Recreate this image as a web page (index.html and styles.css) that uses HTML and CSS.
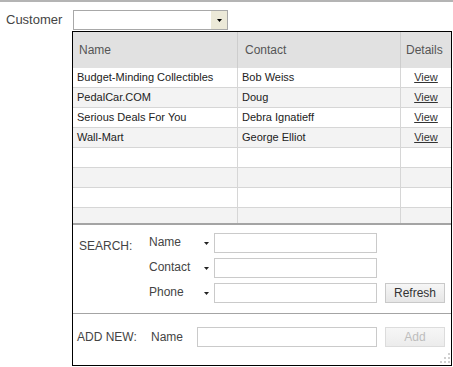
FILE: index.html
```html
<!DOCTYPE html>
<html lang="en">
<head>
<meta charset="UTF-8">
<title>Customer</title>
<link rel="stylesheet" href="styles.css">
</head>
<body>
<div class="customer-row">
    <label class="customer-label">Customer</label>
    <div class="combo">
        <span class="combo-btn">
            <svg width="5" height="3" viewBox="0 0 5 3"><polygon points="0,0 5,0 2.5,3" fill="#000"/></svg>
        </span>
    </div>
</div>
<div class="dropdown">
    <div class="grid">
        <div class="grid-row grid-head">
            <div class="cell">Name</div>
            <div class="cell">Contact</div>
            <div class="cell">Details</div>
        </div>
        <div class="grid-row">
            <div class="cell">Budget-Minding Collectibles</div>
            <div class="cell">Bob Weiss</div>
            <div class="cell link"><a href="#">View</a></div>
        </div>
        <div class="grid-row alt">
            <div class="cell">PedalCar.COM</div>
            <div class="cell">Doug</div>
            <div class="cell link"><a href="#">View</a></div>
        </div>
        <div class="grid-row">
            <div class="cell">Serious Deals For You</div>
            <div class="cell">Debra Ignatieff</div>
            <div class="cell link"><a href="#">View</a></div>
        </div>
        <div class="grid-row alt">
            <div class="cell">Wall-Mart</div>
            <div class="cell">George Elliot</div>
            <div class="cell link"><a href="#">View</a></div>
        </div>
        <div class="grid-row"><div class="cell"></div><div class="cell"></div><div class="cell"></div></div>
        <div class="grid-row alt"><div class="cell"></div><div class="cell"></div><div class="cell"></div></div>
        <div class="grid-row"><div class="cell"></div><div class="cell"></div><div class="cell"></div></div>
        <div class="grid-row alt"><div class="cell"></div><div class="cell"></div><div class="cell"></div></div>
    </div>

    <div class="search">
        <div class="section-label search-label">SEARCH:</div>
        <div class="search-fields">
            <div class="search-line">
                <span class="field-name">Name <svg width="5" height="3" viewBox="0 0 5 3"><polygon points="0,0 5,0 2.5,3" fill="#222"/></svg></span>
                <input class="text-input" type="text">
            </div>
            <div class="search-line">
                <span class="field-name">Contact <svg width="5" height="3" viewBox="0 0 5 3"><polygon points="0,0 5,0 2.5,3" fill="#222"/></svg></span>
                <input class="text-input" type="text">
            </div>
            <div class="search-line">
                <span class="field-name">Phone <svg width="5" height="3" viewBox="0 0 5 3"><polygon points="0,0 5,0 2.5,3" fill="#222"/></svg></span>
                <input class="text-input" type="text">
                <button class="btn">Refresh</button>
            </div>
        </div>
    </div>

    <div class="add-new">
        <div class="section-label add-label">ADD NEW:</div>
        <span class="add-name">Name</span>
        <input class="text-input wide" type="text">
        <button class="btn" disabled>Add</button>
    </div>

    <svg class="grip" width="14" height="12" viewBox="0 0 14 12">
        <rect x="11" y="1" width="2" height="2" fill="#d0d0d0"/>
        <rect x="7" y="5" width="2" height="2" fill="#d0d0d0"/>
        <rect x="11" y="5" width="2" height="2" fill="#d0d0d0"/>
        <rect x="3" y="9" width="2" height="2" fill="#d0d0d0"/>
        <rect x="7" y="9" width="2" height="2" fill="#d0d0d0"/>
        <rect x="11" y="9" width="2" height="2" fill="#d0d0d0"/>
    </svg>
</div>
</body>
</html>
```

FILE: styles.css
```css
body {
    margin: 0;
    border-top: 2px solid #b4b4b4;
    font-family: "Liberation Sans", Arial, sans-serif;
    font-size: 12px;
    color: #333;
    background-color: #fff;
}

.customer-row {
    display: flex;
    padding-top: 8px;
}

.customer-label {
    width: 73px;
    box-sizing: border-box;
    padding-left: 6px;
    line-height: 20px;
    font-size: 13px;
    color: #444;
}

.combo {
    width: 155px;
    height: 20px;
    box-sizing: border-box;
    border: 1px solid #a8a8a8;
    display: flex;
    justify-content: flex-end;
}

.combo-btn {
    width: 16px;
    height: 18px;
    background-color: #ece9d8;
    display: flex;
    align-items: center;
    justify-content: center;
}

.dropdown {
    position: relative;
    width: 380px;
    box-sizing: border-box;
    margin: 1px 0 0 72px;
    border: 1px solid #000;
    background-color: #fff;
}

/* grille des clients */
.grid {
    height: 191px;
    overflow: hidden;
    border-bottom: 2px solid #a4a4a4;
}

.grid-row {
    display: grid;
    grid-template-columns: 165px 163px 1fr;
    height: 20px;
    box-sizing: border-box;
    border-bottom: 1px solid #d6d6d6;
    font-size: 11px;
    color: #222;
}

.grid-row.alt {
    background-color: #f3f3f3;
}

.cell {
    box-sizing: border-box;
    padding-left: 4px;
    border-right: 1px solid #d6d6d6;
    line-height: 19px;
    white-space: nowrap;
    overflow: hidden;
}

.cell:last-child {
    border-right: none;
}

.cell.link {
    padding-left: 0;
    text-align: center;
}

.cell.link a {
    color: #333;
    text-decoration: underline;
}

.grid-head {
    height: 36px;
    border-bottom: none;
    background-color: #e1e1e1;
    font-size: 12px;
    color: #555;
}

.grid-head .cell {
    padding-left: 7px;
    line-height: 36px;
    border-right-color: #cdcdcd;
}

.grid-head .cell:first-child {
    padding-left: 6px;
}

.grid-head .cell:last-child {
    padding-left: 5px;
}

/* recherche */
.search {
    display: flex;
    padding: 8px 0 10px 6px;
    border-bottom: 1px solid #a4a4a4;
}

.section-label {
    font-size: 12px;
    color: #444;
    line-height: 20px;
}

.search-label {
    width: 70px;
    padding-top: 3px;
}

.search-fields {
    display: flex;
    flex-direction: column;
    gap: 5px;
}

.search-line {
    display: flex;
    align-items: center;
    height: 20px;
}

.field-name {
    width: 60px;
    display: flex;
    justify-content: space-between;
    align-items: center;
    margin-right: 5px;
    padding-bottom: 3px;
    color: #444;
}

.field-name svg {
    margin-top: 4px;
}

.text-input {
    width: 163px;
    height: 20px;
    box-sizing: border-box;
    margin: 0;
    border: 1px solid #cacaca;
    background-color: #fff;
}

.text-input.wide {
    width: 180px;
}

.btn {
    width: 60px;
    height: 20px;
    box-sizing: border-box;
    margin: 0 0 0 8px;
    padding: 0;
    border: 1px solid #c9c9c9;
    background: linear-gradient(#f6f6f6, #e6e6e6);
    font-family: "Liberation Sans", Arial, sans-serif;
    font-size: 12px;
    color: #333;
}

.btn:disabled {
    border-color: #dcdcdc;
    background: linear-gradient(#f6f6f6, #ececec);
    color: #bdbdbd;
}

/* ajout */
.add-new {
    display: flex;
    align-items: center;
    padding: 13px 0 18px 4px;
}

.add-label {
    width: 74px;
}

.add-name {
    width: 46px;
    color: #444;
}

.grip {
    position: absolute;
    right: 0;
    bottom: 1px;
}
```
